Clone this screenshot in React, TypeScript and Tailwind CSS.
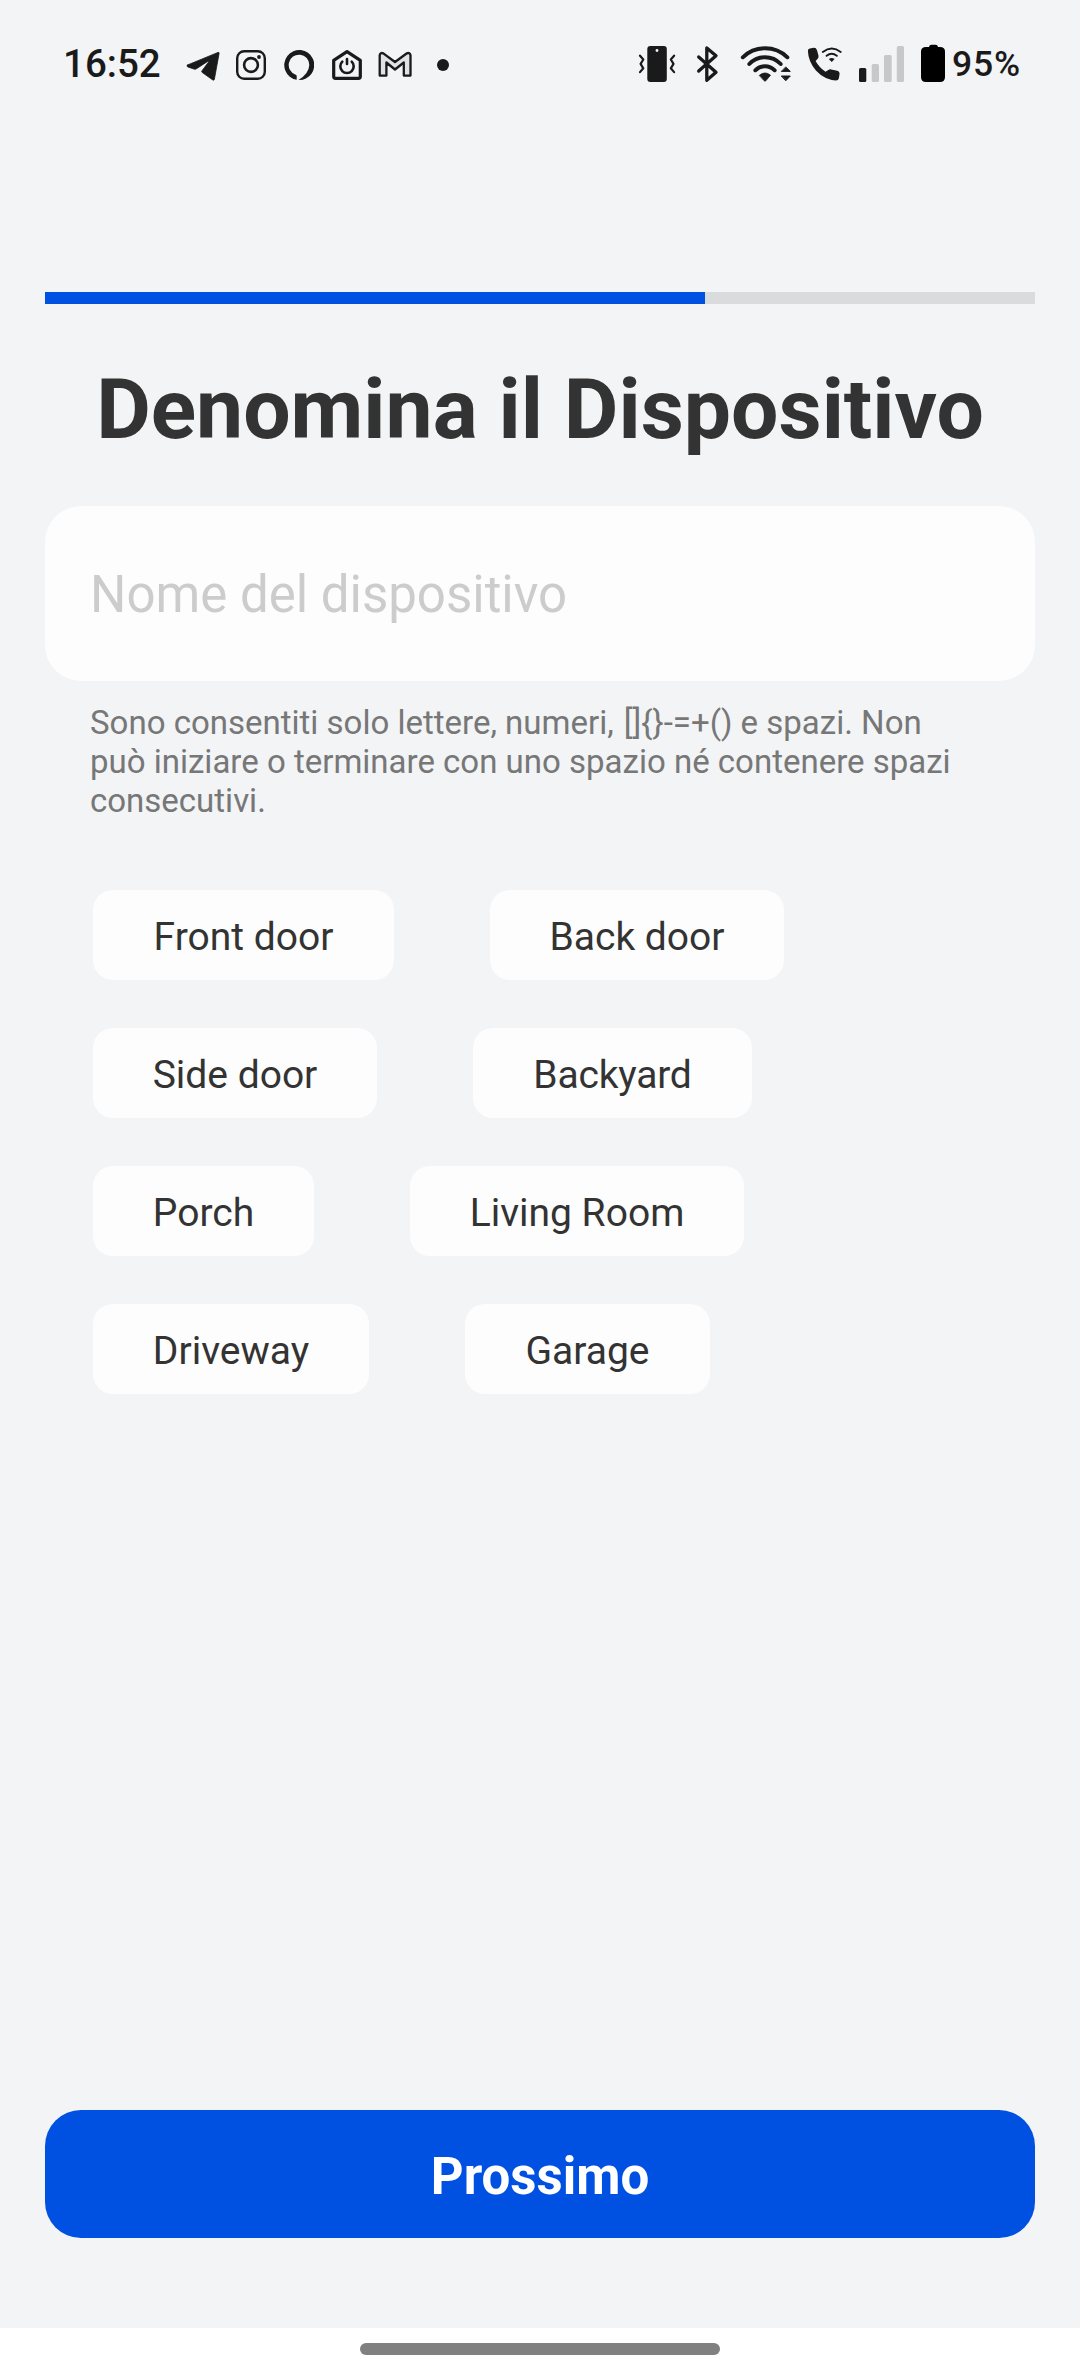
import type { ReactNode } from 'react';

const INK = '#1a1a1a';

type IconProps = { box: string; w: number; h: number; className?: string; children: ReactNode };

function Icon({ box, w, h, className = '', children }: IconProps) {
  return (
    <svg viewBox={box} width={w} height={h} className={`block shrink-0 ${className}`} fill="none" stroke={INK} strokeLinecap="round" strokeLinejoin="round">
      {children}
    </svg>
  );
}

function StatusBar() {
  return (
    <header className="flex h-32 shrink-0 items-start justify-between pt-10 pr-[60px] pl-[63px] text-[#1a1a1a]">
      <div className="flex">
        <span className="h-12 w-[123px] text-[38.5px] leading-12 font-medium">16:52</span>
        <Icon box="186 40 34 48" w={34} h={48} className="mr-4">
          <path d="M187.5 65 218 52.4q1.3-.4 1.1 1L214.400 79.2q-.4 1.500-1.700.7L202 72.300q-.8-.7 0-1.500l6.500-8.800q.5-1.200-.8-.6L196.500 68.700q-1.200.8-2.500.4l-6.300-2.200q-1.600-.9-.2-1.900Z" fill={INK} strokeWidth=".8" />
        </Icon>
        <Icon box="236 40 30 48" w={30} h={48} className="mr-[18px]">
          <rect x="237.200" y="51.200" width="27.600" height="27.600" rx="7" strokeWidth="2.400" />
          <circle cx="251" cy="65" r="6.900" strokeWidth="2.600" />
          <circle cx="259" cy="57" r="1.900" fill={INK} stroke="none" />
        </Icon>
        <Icon box="284 40 30 48" w={30} h={48} className="mr-[18px]">
          <path d="M296.700 79.800V76q0-1-1-1.300A10.300 10.300 0 1 1 309.300 65Q309 73.500 298.500 80A15 15 0 1 0 296.700 79.800Z" fill={INK} stroke="none" />
        </Icon>
        <Icon box="332 40 30 48" w={30} h={48} className="mr-4">
          <path d="M333.700 60.300 347 51.600l13.300 8.700V76.500q0 1.800-1.800 1.800h-23q-1.800 0-1.800-1.800Z" strokeWidth="3.200" />
          <path d="M342.300 61.600a6.700 6.700 0 1 0 9.400 0" strokeWidth="2.600" />
          <path d="M347 59v5" strokeWidth="2.600" />
        </Icon>
        <Icon box="378 40 34 48" w={34} h={48} className="mr-[25px]">
          <path d="M379.700 75.600V55.200q.6-3 3.600-1.900L395 62l11.900-8.700q3-1.100 3.600 1.900v20.400h-6.700V62.500L395 69.500l-8.600-7v13.100Z" fill="#e0e2e4" strokeWidth="2.300" />
        </Icon>
        <Icon box="437 40 12 48" w={12} h={48}>
          <circle cx="443" cy="65" r="6" fill={INK} stroke="none" />
        </Icon>
      </div>

      <div className="flex">
        <Icon box="638 40 38 48" w={38} h={48} className="mr-5">
          <rect x="647.300" y="46" width="19.500" height="36" rx="3" fill={INK} stroke="none" />
          <circle cx="657" cy="50.500" r="1.400" fill="#f2f4f6" stroke="none" />
          <path d="m640 55.700 3.300 3.800-2.700 4.400 2.700 4.400-3.300 3.800M674.100 55.700l-3.300 3.800 2.700 4.400-2.700 4.400 3.300 3.800" strokeWidth="2.200" />
        </Icon>
        <Icon box="696 40 24 48" w={24} h={48} className="mr-5">
          <path d="m698.700 56.900 17.300 15.400-9.200 8V47.900l9.200 7.800-17.300 15.400" strokeWidth="3.300" />
        </Icon>
        <Icon box="740 40 52 48" w={52} h={48} className="mr-[15px]">
          <path d="M742.800 57.300a32 32 0 0 1 44.600 0M749.300 64a21.500 21.500 0 0 1 31.400 0M755.300 70.300a13.500 13.500 0 0 1 19.400 0" strokeWidth="3.900" />
          <path d="M759.500 75.200q5.500-4.600 11 0l-4.700 5.600q-.8.800-1.600 0Z" fill={INK} strokeWidth=".8" />
          <path d="m786 67.200 4.300 4.200h-8.600ZM781.700 76h8.600l-4.300 4.500Z" fill={INK} strokeWidth="1" />
        </Icon>
        <Icon box="807 40 35 48" w={35} h={48} className="mr-[17px]">
          <path d="M807.900 51q-.2-2.200 2-2.600l3.600-.6q2.800-.2 3.500 2.400l1.500 5.600q.4 1.800-1 3.200l-1.900 2q3.600 6.600 9.900 10.700l2.800-1.800q1.300-.9 2.900-.5l6 1.300q2.500.6 2.400 2.900l-.7 4.600q-.5 2.200-3 2.200-11.700-1-20-10-7.600-8.800-8-19.400Z" fill={INK} stroke="none" />
          <path d="M822.800 52q9-7 17.900 0M826.600 55.800q5.100-4 10.200 0" strokeWidth="1.900" />
          <path d="M828.800 59q2.900-2 5.800 0l-2.900 3Z" fill={INK} stroke="none" />
        </Icon>
        <Icon box="859 40 45 48" w={45} h={48} className="mr-[17px]">
          <g stroke="none" fill="#c7c8ca">
            <rect x="859" y="68" width="7.300" height="14" rx="1.500" fill={INK} />
            <rect x="871.700" y="64" width="7.300" height="18" rx="1.500" />
            <rect x="884" y="55" width="7.700" height="27" rx="1.500" />
            <rect x="896.800" y="46" width="7.200" height="36" rx="1.500" />
          </g>
        </Icon>
        <Icon box="921 40 24 48" w={24} h={48} className="mr-[7px]">
          <path d="M929 47q.3-2.300 2.500-2.300h4q2.200 0 2.500 2.300h2q5 0 5 4.500V77q0 5-5 5h-14q-5 0-5-5V51.500q0-4.500 5-4.500Z" fill="#000" stroke="none" />
        </Icon>
        <span className="h-12 w-[68px] text-[35.5px] leading-[49px] font-medium tracking-[0.8px] whitespace-nowrap">95%</span>
      </div>
    </header>
  );
}

const suggestions = [
  [
    { label: 'Front door', size: 'w-[301px]' },
    { label: 'Back door', size: 'w-[294px]' },
  ],
  [
    { label: 'Side door', size: 'w-[284px]' },
    { label: 'Backyard', size: 'w-[279px] tracking-[-0.2px]' },
  ],
  [
    { label: 'Porch', size: 'w-[221px]' },
    { label: 'Living Room', size: 'w-[334px]' },
  ],
  [
    { label: 'Driveway', size: 'w-[276px]' },
    { label: 'Garage', size: 'w-[245px]' },
  ],
];

export default function App() {
  return (
    <div className="flex h-[2376px] w-[1080px] flex-col bg-white font-[Roboto,sans-serif]">
      <div className="flex grow flex-col bg-[#f2f4f6]">
        <StatusBar />
        <main className="flex grow flex-col px-[45px] pt-[164px] pb-[90px]">
          <div className="h-3 bg-[#d9dbdd]">
            <div className="h-full w-2/3 bg-[#0050e2]" />
          </div>
          <h1 className="mt-[57px] text-center text-[84px] leading-[98px] font-bold whitespace-nowrap text-[#333333]">Denomina il Dispositivo</h1>
          <input
            className="mt-[47px] h-[175px] rounded-[36px] bg-[#fdfdfd] px-[45px] pt-px text-[51px] text-[#333333] outline-none placeholder:text-[#cccccc] placeholder:opacity-100"
            placeholder="Nome del dispositivo"
          />
          <p className="mt-[22px] px-[45px] text-[33px] leading-[39px] whitespace-nowrap text-[#777777]">
            Sono consentiti solo lettere, numeri, <span className="ml-[2px]">[]{'{}'}-=+() e spazi. Non</span>
            <br />
            può iniziare o terminare con uno spazio né contenere spazi
            <br />
            consecutivi.
          </p>
          <div className="mt-[70px] flex flex-col gap-12 pl-12">
            {suggestions.map((row) => (
              <div key={row[0].label} className="flex gap-24">
                {row.map(({ label, size }) => (
                  <button key={label} className={`h-[90px] rounded-[20px] bg-[#fdfdfd] pt-[5px] text-[39px] leading-none whitespace-nowrap text-[#333333] ${size}`}>
                    {label}
                  </button>
                ))}
              </div>
            ))}
          </div>
          <button className="mt-auto h-32 rounded-[36px] bg-[#0050e2] pt-1 text-[51px] leading-none font-bold text-white">Prossimo</button>
        </main>
      </div>
      <div className="flex h-12 shrink-0 justify-center bg-white pt-[15px]">
        <div className="h-3 w-[360px] rounded-full bg-[#808080]" />
      </div>
    </div>
  );
}
